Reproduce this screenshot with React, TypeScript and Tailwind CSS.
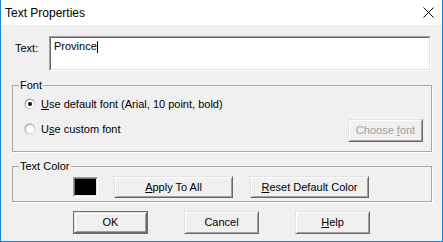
import type { ReactNode } from 'react'

const bevel =
  'border border-t-[#e3e3e3] border-l-[#e3e3e3] border-b-[#696969] border-r-[#696969] shadow-[inset_1px_1px_0_#fff,inset_-1px_-1px_0_#a0a0a0] bg-[#f0f0f0]'

function Button({ children, className = '', disabled = false }: { children: ReactNode; className?: string; disabled?: boolean }) {
  return (
    <div
      className={`${bevel} flex items-center justify-center leading-[13px] ${disabled ? 'text-[#a0a0a0]' : 'text-black'} ${className}`}
    >
      <span className="whitespace-pre">{children}</span>
    </div>
  )
}

function Radio({ checked }: { checked?: boolean }) {
  return (
    <svg width="12" height="12" viewBox="0 0 12 12" className="shrink-0">
      <defs>
        <linearGradient id={checked ? 'rg1' : 'rg2'} x1="0" y1="0" x2="1" y2="1">
          <stop offset="0" stopColor="#8a8a8a" />
          <stop offset="0.5" stopColor="#b5b5b5" />
          <stop offset="1" stopColor="#ffffff" />
        </linearGradient>
      </defs>
      <circle cx="6" cy="6" r="5.5" fill={`url(#${checked ? 'rg1' : 'rg2'})`} />
      <circle cx="6" cy="6" r="4.3" fill="#fff" />
      {checked && <circle cx="6" cy="6" r="2" fill="#000" />}
    </svg>
  )
}

function Group({ label, className = '', children }: { label: string; className?: string; children: ReactNode }) {
  return (
    <div className={`relative border border-[#a9a9a9] shadow-[1px_1px_0_#fff] ${className}`}>
      <span className="absolute left-[6px] top-[-7px] bg-[#f0f0f0] px-[1px] leading-[13px]">{label}</span>
      {children}
    </div>
  )
}

export default function App() {
  return (
    <div
      className="w-[443px] h-[242px] bg-[#f0f0f0] border-x border-b border-[#1883d7] flex flex-col text-[11px] text-black overflow-hidden"
      style={{ fontFamily: '"Liberation Sans", Arial, sans-serif' }}
    >
      {/* Title bar */}
      <div className="h-[25px] bg-white flex items-center justify-between pl-[4px] pr-[8px] shrink-0">
        <span className="text-[12px]">Text Properties</span>
        <svg width="11" height="11" viewBox="0 0 11 11">
          <path d="M0.5 0.5 L10.5 10.5 M10.5 0.5 L0.5 10.5" stroke="#000" strokeWidth="1" />
        </svg>
      </div>

      {/* Text row */}
      <div className="flex items-start mt-[11px] pl-[14px]">
        <span className="w-[34px] pt-[6px] leading-[13px]">Text:</span>
        <div className="w-[382px] h-[35px] border border-t-[#a0a0a0] border-l-[#a0a0a0] border-b-white border-r-white">
          <div className="w-full h-full border border-t-[#696969] border-l-[#696969] border-b-[#e3e3e3] border-r-[#e3e3e3] bg-white pl-[3px] pt-[2px] flex items-start">
            <span className="leading-[13px]">Province</span>
            <span className="inline-block w-px h-[12px] bg-black mt-[1px]" />
          </div>
        </div>
      </div>

      {/* Font group */}
      <Group label="Font" className="ml-[11px] mt-[14px] w-[420px] h-[67px]">
        <div className="flex flex-col pl-[11px] pr-[8px] pt-[10px]">
          <div className="flex items-center gap-[5px] h-[16px]">
            <Radio checked />
            <span className="leading-[13px]">
              <span className="underline">U</span>se default font (Arial, 10 point, bold)
            </span>
          </div>
          <div className="flex items-center justify-between mt-[7px] h-[23px]">
            <div className="flex items-center gap-[5px] mb-[3px]">
              <Radio />
              <span className="leading-[13px]">
                U<span className="underline">s</span>e custom font
              </span>
            </div>
            <Button disabled className="w-[75px] h-[23px]">
              Choose <span className="underline">f</span>ont
            </Button>
          </div>
        </div>
      </Group>

      {/* Text Color group */}
      <Group label="Text Color" className="ml-[11px] mt-[14px] w-[420px] h-[36px]">
        <div className="flex items-start pl-[60px] pt-[9px]">
          <div className="w-[25px] h-[20px] mt-[1px] border border-t-[#a0a0a0] border-l-[#a0a0a0] border-b-white border-r-white">
            <div className="w-full h-full border border-t-[#696969] border-l-[#696969] border-b-[#e3e3e3] border-r-[#e3e3e3] bg-black" />
          </div>
          <Button className="ml-[16px] w-[119px] h-[22px]">
            <span className="underline">A</span>pply To All
          </Button>
          <Button className="ml-[17px] w-[119px] h-[22px]">
            <span className="underline">R</span>eset Default Color
          </Button>
        </div>
      </Group>

      {/* Bottom buttons */}
      <div className="flex mt-[9px] pl-[72px] gap-[36px]">
        <div className="w-[75px] h-[23px] border border-[#6d6d6d]">
          <Button className="w-full h-full">OK</Button>
        </div>
        <Button className="w-[75px] h-[23px]">Cancel</Button>
        <Button className="w-[75px] h-[23px]">
          <span className="underline">H</span>elp
        </Button>
      </div>
    </div>
  )
}
